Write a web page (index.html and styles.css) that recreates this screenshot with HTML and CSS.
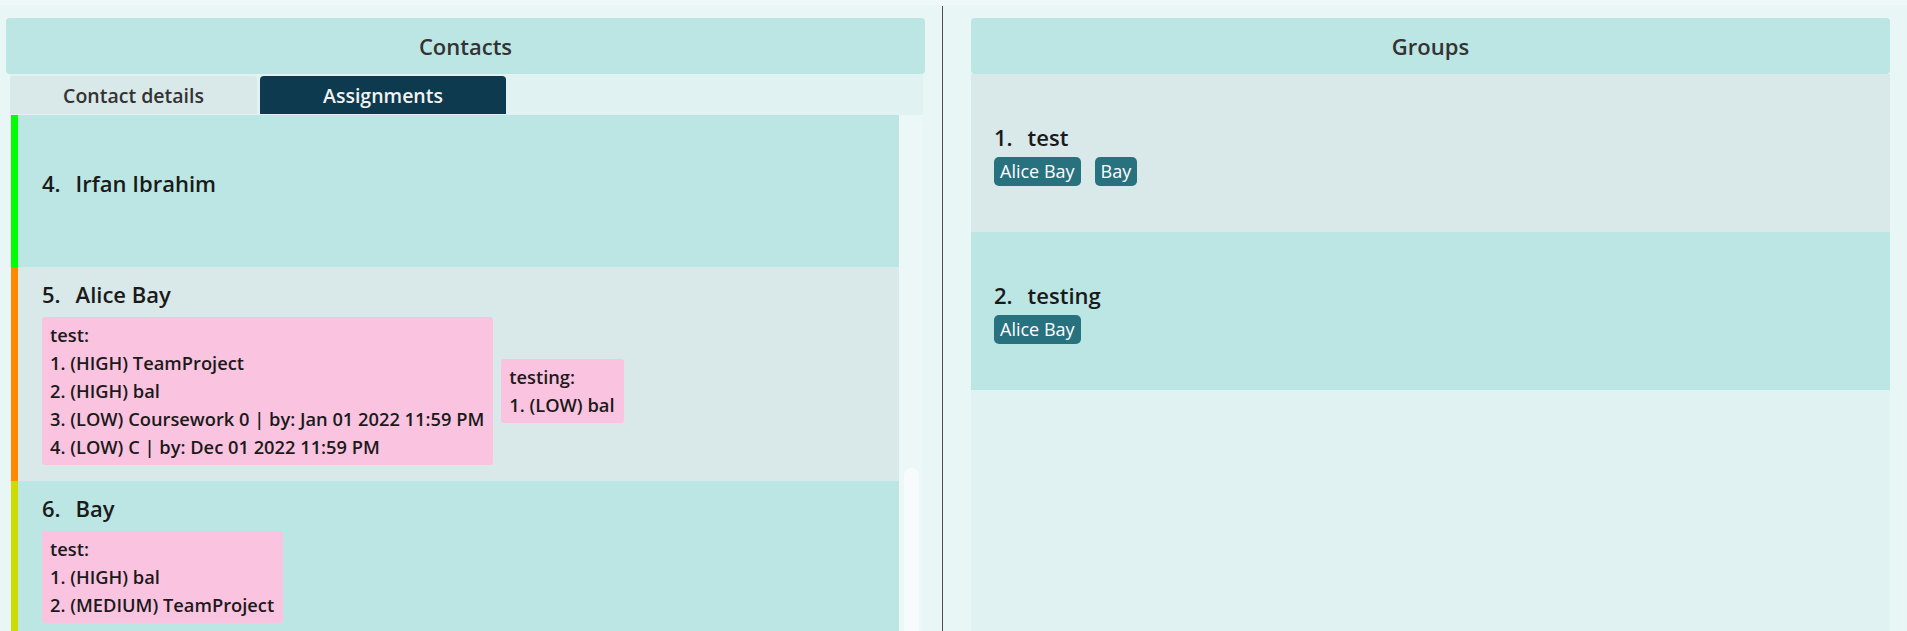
FILE: index.html
```html
<!DOCTYPE html>
<html lang="en">
<head>
<meta charset="utf-8">
<title>Contacts and Groups</title>
<link rel="stylesheet" href="styles.css">
</head>
<body>
<div class="app">
  <section class="panel">
    <div class="panel-header">Contacts</div>
    <div class="tabpane">
      <div class="tabs">
        <div class="tab">Contact details</div>
        <div class="tab active">Assignments</div>
      </div>
      <div class="listwrap">
        <div class="list">
          <div class="card teal bar-green">
            <div class="name"><span class="idx">4.</span><span>Irfan Ibrahim</span></div>
            <div class="asg"></div>
          </div>
          <div class="card grey bar-orange">
            <div class="name"><span class="idx">5.</span><span>Alice Bay</span></div>
            <div class="asg">
              <div class="box">
                <div>test:</div>
                <div>1. (HIGH) TeamProject</div>
                <div>2. (HIGH) bal</div>
                <div>3. (LOW) Coursework 0 | by: Jan 01 2022 11:59 PM</div>
                <div>4. (LOW) C | by: Dec 01 2022 11:59 PM</div>
              </div>
              <div class="box">
                <div>testing:</div>
                <div>1. (LOW) bal</div>
              </div>
            </div>
          </div>
          <div class="card teal bar-yellow">
            <div class="name"><span class="idx">6.</span><span>Bay</span></div>
            <div class="asg">
              <div class="box">
                <div>test:</div>
                <div>1. (HIGH) bal</div>
                <div>2. (MEDIUM) TeamProject</div>
              </div>
            </div>
          </div>
        </div>
        <div class="scrollbar"><div class="thumb"></div></div>
      </div>
    </div>
  </section>
  <div class="divider"></div>
  <section class="panel">
    <div class="panel-header">Groups</div>
    <div class="glist">
      <div class="gcard grey">
        <div class="name"><span class="idx">1.</span><span>test</span></div>
        <div class="tags"><span class="tag">Alice Bay</span><span class="tag">Bay</span></div>
      </div>
      <div class="gcard teal">
        <div class="name"><span class="idx">2.</span><span>testing</span></div>
        <div class="tags"><span class="tag">Alice Bay</span></div>
      </div>
    </div>
  </section>
</div>
</body>
</html>
```
FILE: styles.css
```css
* { box-sizing: border-box; }
html, body { margin: 0; height: 100%; }
body {
  background: linear-gradient(#EEF8F8 0, #EEF8F8 5px, #E9F6F6 5px);
  font-family: "Open Sans", "Noto Sans", sans-serif;
  overflow: hidden;
}
.app {
  display: flex;
  height: 631px;
  padding: 6px 0 0 6px;
}
.panel {
  width: 919px;
  display: flex;
  flex-direction: column;
  padding-top: 12px;
  min-height: 0;
}
.divider {
  width: 1px;
  background: #4f4f4f;
  margin: 0 28px 0 17px;
}
.panel-header {
  height: 56px;
  flex: none;
  background: #BCE6E3;
  border-radius: 4px;
  display: flex;
  align-items: center;
  justify-content: center;
  font-size: 22px;
  font-weight: 600;
  color: #333;
}
.tabpane {
  margin: 0 2px 0 4px;
  flex: 1;
  display: flex;
  flex-direction: column;
  min-height: 0;
}
.tabs {
  height: 41px;
  flex: none;
  background: #E0F2F2;
  display: flex;
  gap: 3px;
  padding-top: 2px;
}
.tab {
  width: 247px;
  height: 38px;
  display: flex;
  align-items: center;
  justify-content: center;
  font-size: 19.5px;
  font-weight: 600;
  color: #333;
  background: #D9E8E8;
  border-radius: 4px 4px 0 0;
}
.tab.active {
  width: 246px;
  background: #0D3A4F;
  color: #F2F2F2;
}
.listwrap {
  flex: 1;
  display: flex;
  min-height: 0;
}
.list {
  margin-left: 1px;
  width: 888px;
  overflow: hidden;
}
.scrollbar {
  width: 24px;
  background: #ECF7F7;
  padding: 353px 4px 0 5px;
}
.thumb {
  height: 300px;
  border-radius: 7px;
  background: #F7FBFB;
}
.teal { background: #BCE6E3; }
.grey { background: #D9E8E8; }
.card {
  display: flex;
  flex-direction: column;
  justify-content: center;
  min-height: 152px;
  padding: 10px 14px 16px 24px;
  border-left: 7px solid;
}
.bar-green { border-left-color: #00FF00; }
.bar-orange { border-left-color: #FF8A00; }
.bar-yellow { border-left-color: #CCDC00; }
.name {
  display: flex;
  font-size: 22px;
  font-weight: 600;
  line-height: 34px;
  color: #1a1a1a;
}
.idx { margin-right: 15px; }
.asg {
  display: flex;
  flex-wrap: wrap;
  align-items: center;
  gap: 8px;
  margin-top: 6px;
  min-height: 4px;
}
.box {
  background: #FAC4E0;
  border-radius: 3px;
  padding: 4px 9px 4px 8px;
  font-size: 18.3px;
  font-weight: 600;
  line-height: 28px;
  color: #1a1a1a;
}
.glist {
  flex: 1;
  background: #E0F2F2;
}
.gcard {
  height: 158px;
  display: flex;
  flex-direction: column;
  justify-content: center;
  padding-left: 23px;
}
.tags {
  display: flex;
  gap: 14px;
  margin-top: 3px;
}
.tag {
  background: #28717F;
  color: #fff;
  border-radius: 5px;
  height: 29px;
  padding: 0 6px;
  font-size: 18px;
  line-height: 29px;
}
```
